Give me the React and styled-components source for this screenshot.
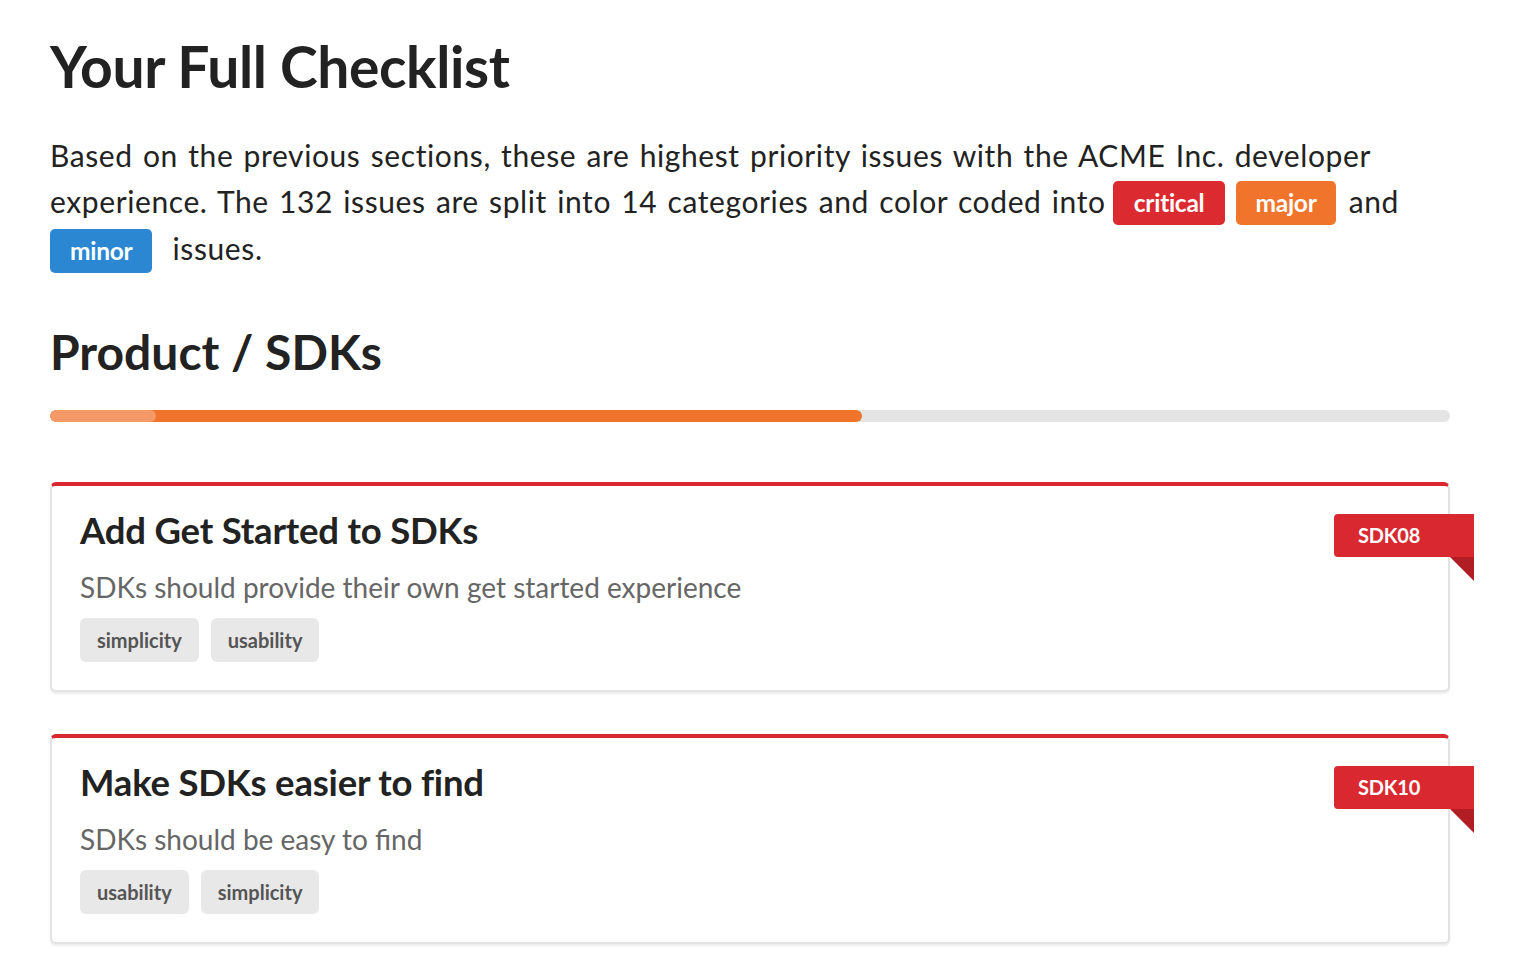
import React from "react";
import styled, { createGlobalStyle } from "styled-components";

const Global = createGlobalStyle`
  html, body { margin: 0; padding: 0; background: #fff; }
  body { font-family: Lato, "Open Sans", sans-serif; color: #222; }
`;

const Page = styled.main`
  width: 1400px;
  padding: 31px 0 40px 50px;
`;

const Title = styled.h1`
  margin: 0;
  font-size: 57px;
  line-height: 70px;
  font-weight: 700;
  color: #222;
  letter-spacing: -0.4px;
`;

const Intro = styled.p`
  margin: 31px 0 0;
  font-size: 30px;
  line-height: 46px;
  letter-spacing: 0.6px;
  word-spacing: 2px;
  color: #222;
  width: 1380px;
`;

const colors = { critical: "#db2a30", major: "#f0742c", minor: "#2b87d1" };

const Badge = styled.span`
  display: inline-block;
  vertical-align: middle;
  height: 44px;
  line-height: 44px;
  padding: 0 ${(p) => p.$px || 20}px;
  margin: -4px ${(p) => p.$mr}px 0 ${(p) => p.$ml}px;
  border-radius: 5px;
  background: ${(p) => colors[p.$kind]};
  color: #fff;
  font-size: 24.5px;
  font-weight: 700;
  letter-spacing: -0.3px;
  word-spacing: 0;
`;

const Section = styled.h2`
  margin: 50px 0 0;
  font-size: 48px;
  line-height: 58px;
  font-weight: 700;
  color: #222;
`;

const Track = styled.div`
  margin-top: 29px;
  height: 12px;
  border-radius: 6px;
  background: #e4e4e4;
  display: flex;
  overflow: hidden;
`;

const Fill = styled.div`
  position: relative;
  z-index: ${(p) => p.$z || 0};
  height: 100%;
  border-radius: 6px;
  background: ${(p) => p.$color};
  flex: none;
`;

const Cards = styled.div`
  margin-top: 60px;
  display: flex;
  flex-direction: column;
  gap: 42px;
`;

const Card = styled.article`
  position: relative;
  border: 2px solid #e3e3e3;
  border-top: 4px solid #d9282f;
  border-radius: 6px;
  box-shadow: 0 2px 2px rgba(0, 0, 0, 0.08);
  padding: 22px 28px 28px;
  background: #fff;
`;

const CardTitle = styled.h3`
  margin: 0;
  font-size: 36.5px;
  line-height: 44px;
  font-weight: 700;
  color: #222;
  letter-spacing: -0.2px;
`;

const CardDesc = styled.p`
  margin: 16px 0 0;
  font-size: 28px;
  line-height: 39px;
  color: #666;
`;

const Tags = styled.div`
  margin-top: 11px;
  display: flex;
  gap: 12px;
`;

const Tag = styled.span`
  height: 44px;
  line-height: 44px;
  padding: 0 17px;
  border-radius: 6px;
  background: #e8e8e8;
  color: #555;
  font-size: 20px;
  font-weight: 700;
`;

const Ribbon = styled.div`
  position: absolute;
  top: 28px;
  right: -26px;
  width: 140px;
  height: 43px;
  box-sizing: border-box;
  padding-left: 24px;
  line-height: 43px;
  background: #d9282f;
  color: #fff;
  font-size: 20px;
  font-weight: 700;
  border-radius: 4px 0 0 4px;
  letter-spacing: -0.2px;
  &::after {
    content: "";
    position: absolute;
    right: 0;
    top: 43px;
    border-style: solid;
    border-width: 24px 24px 0 0;
    border-color: #b01e24 transparent transparent transparent;
    transform: scaleX(-1);
  }
`;

const items = [
  {
    id: "SDK08",
    title: "Add Get Started to SDKs",
    desc: "SDKs should provide their own get started experience",
    tags: ["simplicity", "usability"],
  },
  {
    id: "SDK10",
    title: "Make SDKs easier to find",
    desc: "SDKs should be easy to find",
    tags: ["usability", "simplicity"],
  },
];

export default function App() {
  return (
    <>
      <Global />
      <Page>
        <Title>Your Full Checklist</Title>
        <Intro>
          Based on the previous sections, these are highest priority issues with the ACME Inc. developer
          experience. The 132 issues are split into 14 categories and color coded into{" "}
          <Badge $kind="critical" $px={21} $ml={-3} $mr={0}>critical</Badge>{" "}
          <Badge $kind="major" $ml={0} $mr={2}>major</Badge> and{" "}
          <Badge $kind="minor" $ml={0} $mr={10}>minor</Badge> issues.
        </Intro>
        <Section>Product / SDKs</Section>
        <Track>
          <Fill $color="#f49a69" $z={1} style={{ width: 106 }} />
          <Fill $color="#f0742c" style={{ width: 812, marginLeft: -106 }} />
        </Track>
        <Cards>
          {items.map((it) => (
            <Card key={it.id}>
              <CardTitle>{it.title}</CardTitle>
              <CardDesc>{it.desc}</CardDesc>
              <Tags>
                {it.tags.map((t) => (
                  <Tag key={t}>{t}</Tag>
                ))}
              </Tags>
              <Ribbon>{it.id}</Ribbon>
            </Card>
          ))}
        </Cards>
      </Page>
    </>
  );
}
